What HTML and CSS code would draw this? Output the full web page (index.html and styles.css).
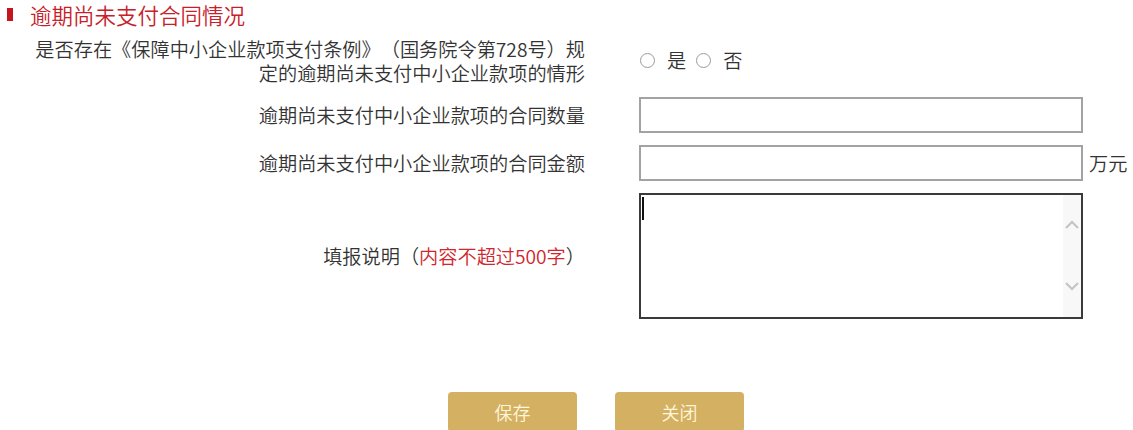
FILE: index.html
```html
<!DOCTYPE html>
<html lang="zh-CN">
  <head>
    <meta charset="UTF-8" />
    <meta name="viewport" content="width=device-width, initial-scale=1.0" />
    <title>逾期尚未支付合同情况</title>
    <link rel="stylesheet" href="styles.css">
  </head>

  <body>
    <h3 class="section-title">逾期尚未支付合同情况</h3>

    <form class="form">
      <div class="row row-radio">
        <label class="row-label">
          是否存在《保障中小企业款项支付条例》（国务院令第728号）规<br />定的逾期尚未支付中小企业款项的情形
        </label>
        <div class="radio-group">
          <input type="radio" name="overdue" id="overdueYes" />
          <label for="overdueYes">是</label>
          <input type="radio" name="overdue" id="overdueNo" />
          <label for="overdueNo">否</label>
        </div>
      </div>

      <div class="row">
        <label class="row-label" for="contractCount">逾期尚未支付中小企业款项的合同数量</label>
        <input type="text" id="contractCount" class="text-input" />
      </div>

      <div class="row">
        <label class="row-label" for="contractAmount">逾期尚未支付中小企业款项的合同金额</label>
        <input type="text" id="contractAmount" class="text-input" />
        <span class="unit">万元</span>
      </div>

      <div class="row">
        <label class="row-label" for="remark">填报说明（<span class="hint">内容不超过500字</span>）</label>
        <div class="textarea-wrap">
          <textarea id="remark" class="remark"></textarea>
          <span class="caret"></span>
          <div class="fake-scroll">
            <svg width="16" height="12" viewBox="0 0 16 12"><path d="M2 9 L8 3 L14 9" fill="none" stroke="#c4c4c4" stroke-width="2" /></svg>
            <svg width="16" height="12" viewBox="0 0 16 12"><path d="M2 3 L8 9 L14 3" fill="none" stroke="#c4c4c4" stroke-width="2" /></svg>
          </div>
        </div>
      </div>

      <div class="actions">
        <button type="button" class="btn">保存</button>
        <button type="button" class="btn">关闭</button>
      </div>
    </form>
  </body>
</html>
```

FILE: styles.css
```css
body {
  font-family: "Microsoft YaHei", "Noto Sans CJK SC", "Noto Sans", sans-serif;
  font-weight: 350;
  margin: 0;
  background-color: #ffffff;
  color: #333333;
  font-size: 19.2px;
  text-spacing-trim: space-all;
}

.section-title {
  display: flex;
  align-items: center;
  height: 28px;
  margin: 0 0 9px 0;
  padding-left: 7px;
  font-size: 21.5px;
  font-weight: 350;
  color: #c7202a;
}

.section-title::before {
  content: "";
  flex-shrink: 0;
  width: 6px;
  height: 13px;
  margin-right: 17px;
  background-color: #c4161c;
}

.form {
  display: flex;
  flex-direction: column;
  gap: 12px;
}

.row {
  display: grid;
  grid-template-columns: 585px 444px auto;
  column-gap: 54px;
  align-items: center;
}

.row-label {
  text-align: right;
  line-height: 24px;
}

.row-radio {
  height: 48px;
}

.radio-group {
  display: flex;
  align-items: center;
  padding-bottom: 2px;
}

.radio-group input {
  appearance: none;
  width: 15px;
  height: 15px;
  margin: 0 12px 0 1px;
  border: 1px solid #9a9a9a;
  border-radius: 50%;
  background-color: #fff;
}

.radio-group label {
  margin-right: 9px;
}

.text-input {
  box-sizing: border-box;
  height: 36px;
  width: 444px;
  border: 2px solid #a3a3a3;
  padding: 0 6px;
  font-size: 16px;
}

.unit {
  margin-left: -48px;
}

.hint {
  color: #d0262d;
}

.textarea-wrap {
  position: relative;
  width: 444px;
  height: 126px;
}

.remark {
  box-sizing: border-box;
  width: 100%;
  height: 100%;
  border: 2px solid #3a3a3a;
  resize: none;
  overflow: hidden;
  display: block;
}

.caret {
  position: absolute;
  left: 3px;
  top: 4px;
  width: 2px;
  height: 23px;
  background-color: #111;
}

.fake-scroll {
  position: absolute;
  right: 2px;
  top: 2px;
  bottom: 2px;
  width: 18px;
  background-color: #f8f8f8;
  display: flex;
  flex-direction: column;
  justify-content: space-between;
  align-items: center;
  padding: 24px 0 25px;
  box-sizing: border-box;
}

.actions {
  display: flex;
  justify-content: center;
  gap: 38px;
  margin-top: 61px;
  padding-left: 59px;
}

.btn {
  width: 129px;
  height: 40px;
  border: none;
  border-radius: 4px;
  background-color: #d4b062;
  color: #fff6dc;
  font-family: inherit;
  font-weight: 350;
  font-size: 18px;
  cursor: pointer;
}
```
